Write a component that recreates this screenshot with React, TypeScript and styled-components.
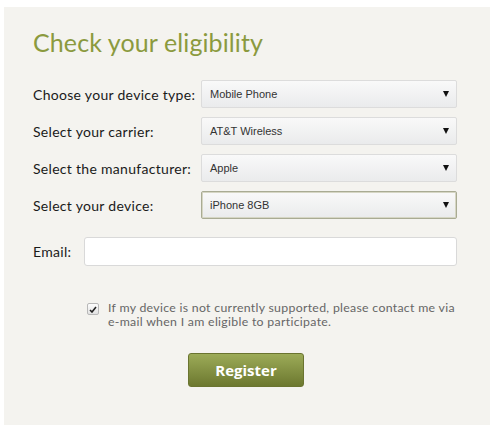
import styled, { createGlobalStyle } from "styled-components";

const GlobalStyle = createGlobalStyle`
    html, body {
        margin: 0;
        padding: 0;
        background: #fff;
    }
`;

const Page = styled.div`
    width: 495px;
    height: 435px;
    padding: 7px 5px 10px 4px;
    box-sizing: border-box;
`;

const Panel = styled.div`
    background: #f4f3ef;
    height: 418px;
    padding: 20px 33px 0 29px;
    box-sizing: border-box;
`;

const Title = styled.h1`
    margin: 0 0 23px 0;
    font-family: "Lato", "Open Sans", sans-serif;
    font-weight: 400;
    font-size: 25px;
    color: #8b9a3e;
    letter-spacing: 0.1px;
`;

const Row = styled.div<{ gap?: number }>`
    display: flex;
    align-items: center;
    margin-bottom: ${p => p.gap ?? 9}px;
`;

const Label = styled.label<{ width?: number }>`
    width: ${p => p.width ?? 168}px;
    flex-shrink: 0;
    font-family: "Lato", "Open Sans", sans-serif;
    font-size: 14px;
    color: #1a1a1a;
    letter-spacing: 0.3px;
`;

const Select = styled.div<{ focused?: boolean }>`
    flex: 1;
    height: 28px;
    box-sizing: border-box;
    display: flex;
    align-items: center;
    justify-content: space-between;
    padding: 0 7px 0 8px;
    border: 1px solid ${p => (p.focused ? "#a9ab93" : "#dcdcdc")};
    border-radius: 2px;
    background: linear-gradient(#f9f9f9, #eaebec);
    font-family: "Liberation Sans", Arial, sans-serif;
    font-size: 11px;
    color: #333;
    box-shadow: ${p => (p.focused ? "inset 0 0 0 1px #d6d6c4" : "none")};
`;

const Arrow = styled.span`
    width: 0;
    height: 0;
    border-left: 3.5px solid transparent;
    border-right: 3.5px solid transparent;
    border-top: 6px solid #111;
`;

const EmailInput = styled.div`
    flex: 1;
    height: 29px;
    box-sizing: border-box;
    background: #fff;
    border: 1px solid #d9d9d9;
    border-radius: 3px;
`;

const Consent = styled.div`
    display: flex;
    align-items: flex-start;
    margin: 35px 0 0 54px;
    gap: 9px;
`;

const Check = styled.span`
    width: 10px;
    height: 10px;
    margin-top: 2px;
    flex-shrink: 0;
    border: 1px solid #b8b8b8;
    border-radius: 2px;
    background: linear-gradient(#fdfdfd, #e2e2e2);
    display: flex;
    align-items: center;
    justify-content: center;
`;

const ConsentText = styled.p`
    margin: 0;
    font-family: "Lato", "Open Sans", sans-serif;
    font-size: 12.3px;
    line-height: 14px;
    color: #666;
    letter-spacing: 0.3px;
`;

const ButtonRow = styled.div`
    display: flex;
    justify-content: center;
    margin-top: 24px;
    padding-left: 2px;
`;

const Button = styled.button`
    width: 116px;
    height: 34px;
    border: 1px solid #6a7430;
    border-radius: 3px;
    background: linear-gradient(#9cab58, #6c782f);
    color: #fff;
    font-family: "Open Sans", "Lato", sans-serif;
    font-weight: 700;
    font-size: 15px;
    cursor: pointer;
`;

const selects = [
    { label: "Choose your device type:", value: "Mobile Phone" },
    { label: "Select your carrier:", value: "AT&T Wireless" },
    { label: "Select the manufacturer:", value: "Apple" },
    { label: "Select your device:", value: "iPhone 8GB", focused: true },
];

export default function App() {
    return (
        <>
            <GlobalStyle />
            <Page>
                <Panel>
                    <Title>Check your eligibility</Title>
                    {selects.map((s, i) => (
                        <Row key={s.label} gap={i === selects.length - 1 ? 18 : 9}>
                            <Label>{s.label}</Label>
                            <Select focused={s.focused}>
                                <span>{s.value}</span>
                                <Arrow />
                            </Select>
                        </Row>
                    ))}
                    <Row>
                        <Label width={51}>Email:</Label>
                        <EmailInput />
                    </Row>
                    <Consent>
                        <Check>
                            <svg width="8" height="7" viewBox="0 0 8 7">
                                <path d="M1 4 L3 6 L7 1" stroke="#222" strokeWidth="1.6" fill="none" />
                            </svg>
                        </Check>
                        <ConsentText>
                            If my device is not currently supported, please contact me via
                            <br />
                            e-mail when I am eligible to participate.
                        </ConsentText>
                    </Consent>
                    <ButtonRow>
                        <Button>Register</Button>
                    </ButtonRow>
                </Panel>
            </Page>
        </>
    );
}
